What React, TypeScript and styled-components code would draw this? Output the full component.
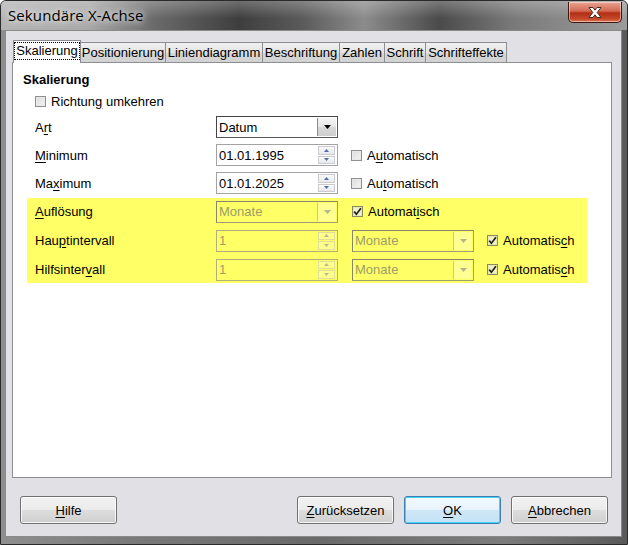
import React from "react";
import styled, { createGlobalStyle, css } from "styled-components";

const GlobalStyle = createGlobalStyle`
  html, body {
    margin: 0;
    padding: 0;
    background: #ffffff;
  }
  body {
    font-family: "Liberation Sans", Arial, sans-serif;
    font-size: 13px;
    color: #000;
  }
`;

const Window = styled.div`
  width: 628px;
  height: 545px;
  box-sizing: border-box;
  display: flex;
  flex-direction: column;
  background: linear-gradient(
      90deg,
      #8f8f8f 0%,
      #7a7a7a 20%,
      #6a6a6a 50%,
      #7c7c7c 80%,
      #5a5a5a 100%
    );
  border: 1px solid #2a2a2a;
  border-radius: 6px 6px 0 0;
  overflow: hidden;
`;

const TitleBar = styled.div`
  height: 29px;
  flex: none;
  display: flex;
  align-items: center;
  justify-content: space-between;
  padding: 0 5px 0 7px;
  background:
    linear-gradient(180deg, rgba(255, 255, 255, 0.25) 0%, rgba(255, 255, 255, 0) 60%),
    linear-gradient(
      90deg,
      #b4b4b4 0%,
      #a8a8a8 14%,
      #6c6c6c 24%,
      #3e3e3e 38%,
      #5a5a5a 48%,
      #8c8c8c 58%,
      #4a4a4a 70%,
      #7a7a7a 82%,
      #9c9c9c 100%
    );
`;

const Title = styled.span`
  font-family: "Open Sans", "Liberation Sans", sans-serif;
  font-size: 15px;
  color: #000;
  letter-spacing: 0.1px;
  text-shadow: 0 0 6px rgba(255, 255, 255, 0.95), 0 0 12px rgba(255, 255, 255, 0.8);
  margin-top: -1px;
`;

const CloseButton = styled.div`
  align-self: flex-start;
  margin-top: 1px;
  width: 52px;
  height: 20px;
  border: 1px solid #3d1810;
  border-top: none;
  border-radius: 0 0 5px 5px;
  background: linear-gradient(180deg, #e8a493 0%, #d46a52 45%, #b22f14 55%, #c64a2c 85%, #e07a55 100%);
  box-shadow: inset 0 0 0 1px rgba(255, 255, 255, 0.45);
  display: flex;
  align-items: center;
  justify-content: center;
`;

const Client = styled.div`
  flex: 1;
  margin: 0 5px 7px 4px;
  background: #e1e0e5;
  border: 1px solid #8a8a8a;
  display: flex;
  flex-direction: column;
  padding: 9px 9px 0 6px;
`;

const TabRow = styled.div`
  display: flex;
  align-items: flex-end;
  height: 22px;
  padding-left: 1px;
  position: relative;
  z-index: 1;
`;

const Tab = styled.div<{ $w: number; $active?: boolean }>`
  width: ${(p) => p.$w}px;
  box-sizing: border-box;
  height: 20px;
  border: 1px solid #8c8e94;
  border-bottom: none;
  margin-left: -1px;
  background: linear-gradient(180deg, #f1f1f1 0%, #e3e3e3 50%, #d7d7d7 51%, #d2d2d2 100%);
  display: flex;
  align-items: center;
  justify-content: center;
  font-size: 13px;
  white-space: nowrap;
  &:first-child {
    margin-left: 0;
  }
  ${(p) =>
    p.$active &&
    css`
      height: 23px;
      margin-bottom: -1px;
      background: #ffffff;
      padding-bottom: 2px;
    `}
`;

const FocusText = styled.span`
  outline: 1px dotted #000;
  outline-offset: 0;
  padding: 0 1px;
  line-height: 16px;
`;

const Panel = styled.div`
  height: 416px;
  box-sizing: border-box;
  background: #ffffff;
  border: 1px solid #8c8e94;
  padding: 8px 0 0 10px;
  display: flex;
  flex-direction: column;
`;

const SectionTitle = styled.div`
  font-weight: bold;
  font-size: 13px;
  height: 17px;
  line-height: 17px;
`;

const CheckRow = styled.label`
  display: flex;
  align-items: center;
  gap: 5px;
  height: 22px;
  padding-left: 12px;
  margin-top: 2px;
`;

const Row = styled.div<{ $first?: boolean }>`
  display: flex;
  align-items: center;
  height: 22px;
  margin-top: ${(p) => (p.$first ? 4 : 6)}px;
`;

const HighlightBlock = styled.div`
  margin: 4px 0 0 4px;
  width: 560px;
  box-sizing: border-box;
  background: #ffff66;
  padding: 2px 0;
  display: flex;
  flex-direction: column;
`;

const HRow = styled.div<{ $first?: boolean }>`
  display: flex;
  align-items: center;
  height: 23px;
  margin-top: ${(p) => (p.$first ? 0 : 6)}px;
`;

const Label = styled.span<{ $w: number; $indent: number }>`
  width: ${(p) => p.$w}px;
  padding-left: ${(p) => p.$indent}px;
  box-sizing: border-box;
  flex: none;
  white-space: nowrap;
`;

const Field = styled.div<{ $disabled?: boolean }>`
  width: 122px;
  height: 22px;
  box-sizing: border-box;
  flex: none;
  display: flex;
  align-items: stretch;
  border: 1px solid ${(p) => (p.$disabled ? "#b0b07a" : "#a3a3a3")};
  background: ${(p) => (p.$disabled ? "transparent" : "#ffffff")};
  color: ${(p) => (p.$disabled ? "#9d9d6a" : "#000")};
`;

const ComboField = styled(Field)`
  border-color: ${(p) => (p.$disabled ? "#9e9e74" : "#555")};
  border-top-color: ${(p) => (p.$disabled ? "#86866a" : "#444")};
  border-left-color: ${(p) => (p.$disabled ? "#86866a" : "#444")};
`;

const FieldText = styled.span`
  flex: 1;
  padding-left: 2px;
  display: flex;
  align-items: center;
  white-space: nowrap;
  overflow: hidden;
`;

const DropButton = styled.div<{ $disabled?: boolean }>`
  width: 18px;
  flex: none;
  margin: 1px;
  display: flex;
  align-items: center;
  justify-content: center;
  border-left: 1px solid ${(p) => (p.$disabled ? "#c8c88a" : "#8d8d8d")};
  background: ${(p) =>
    p.$disabled
      ? "rgba(255,255,230,0.35)"
      : "linear-gradient(180deg, #f4f4f4 0%, #e6e6e6 50%, #d8d8d8 51%, #cfcfcf 100%)"};
`;

const SpinButtons = styled.div`
  width: 17px;
  flex: none;
  margin: 1px 2px 1px 1px;
  display: flex;
  flex-direction: column;
  gap: 1px;
`;

const SpinHalf = styled.div<{ $disabled?: boolean }>`
  flex: 1;
  display: flex;
  align-items: center;
  justify-content: center;
  border: 1px solid ${(p) => (p.$disabled ? "#dede9a" : "#c9cbd1")};
  background: ${(p) =>
    p.$disabled ? "rgba(255,255,230,0.3)" : "linear-gradient(180deg, #fafafa 0%, #e9e9ec 100%)"};
`;

const Box = styled.span<{ $disabled?: boolean }>`
  width: 11px;
  height: 11px;
  flex: none;
  box-sizing: border-box;
  border: 1px solid ${(p) => (p.$disabled ? "#8a8a60" : "#8f8f8f")};
  background: ${(p) =>
    p.$disabled
      ? "#f0f0c8"
      : "linear-gradient(135deg, #dcdcdc 0%, #f4f4f4 100%)"};
  box-shadow: inset 0 0 0 1px ${(p) => (p.$disabled ? "#e8e8b0" : "#e9e9e9")};
  display: flex;
  align-items: center;
  justify-content: center;
`;

const AutoCheck = styled.div<{ $gap: number }>`
  display: flex;
  align-items: center;
  gap: 5px;
  margin-left: ${(p) => p.$gap}px;
  white-space: nowrap;
`;

const AutoCombo = styled.div`
  margin-left: 14px;
  display: flex;
`;

const Footer = styled.div`
  flex: 1;
  display: flex;
  align-items: center;
  padding: 6px 4px 0 8px;
`;

const Spacer = styled.div`
  flex: 1;
`;

const Button = styled.button<{ $default?: boolean }>`
  width: 97px;
  height: 28px;
  margin-left: 10px;
  font-family: "Liberation Sans", Arial, sans-serif;
  font-size: 13px;
  color: #000;
  border-radius: 3px;
  border: 1px solid ${(p) => (p.$default ? "#3c7fb1" : "#707070")};
  background: ${(p) =>
    p.$default
      ? "linear-gradient(180deg, #f2f9fd 0%, #e7f3fb 50%, #cfe8f8 51%, #c3e1f6 100%)"
      : "linear-gradient(180deg, #f2f2f2 0%, #ebebeb 50%, #dddddd 51%, #cfcfcf 100%)"};
  box-shadow: inset 0 0 0 1px ${(p) => (p.$default ? "#48d0f8" : "rgba(255,255,255,0.8)")};
  padding: 0;
  &:first-child {
    margin-left: 0;
  }
`;

const Mn = styled.u`
  text-decoration-thickness: 1px;
  text-underline-offset: 2px;
`;

const ArrowDown = ({ color = "#000" }: { color?: string }) => (
  <svg width="7" height="4" viewBox="0 0 7 4">
    <path d="M0 0H7L3.5 4Z" fill={color} />
  </svg>
);

const SpinArrow = ({ up, color }: { up?: boolean; color: string }) => (
  <svg width="5" height="3" viewBox="0 0 5 3">
    <path d={up ? "M0 3H5L2.5 0Z" : "M0 0H5L2.5 3Z"} fill={color} />
  </svg>
);

const Tick = () => (
  <svg width="9" height="9" viewBox="0 0 9 9">
    <path d="M1.2 4.6L3.4 7.2L7.9 1.2" stroke="#202020" strokeWidth="1.7" fill="none" />
  </svg>
);

const Combo = ({ text, disabled }: { text: string; disabled?: boolean }) => (
  <ComboField $disabled={disabled}>
    <FieldText>{text}</FieldText>
    <DropButton $disabled={disabled}>
      <ArrowDown color={disabled ? "#b5b58a" : "#000"} />
    </DropButton>
  </ComboField>
);

const Spin = ({ text, disabled }: { text: string; disabled?: boolean }) => (
  <Field $disabled={disabled}>
    <FieldText>{text}</FieldText>
    <SpinButtons>
      <SpinHalf $disabled={disabled}>
        <SpinArrow up color={disabled ? "#b8b88a" : "#4a6ea8"} />
      </SpinHalf>
      <SpinHalf $disabled={disabled}>
        <SpinArrow color={disabled ? "#b8b88a" : "#4a6ea8"} />
      </SpinHalf>
    </SpinButtons>
  </Field>
);

const Auto = ({
  checked,
  gap,
  children,
}: {
  checked?: boolean;
  gap: number;
  children: React.ReactNode;
}) => (
  <AutoCheck $gap={gap}>
    <Box $disabled={checked}>{checked && <Tick />}</Box>
    <span>{children}</span>
  </AutoCheck>
);

const tabs = [
  { name: "Positionierung", w: 86 },
  { name: "Liniendiagramm", w: 98 },
  { name: "Beschriftung", w: 78 },
  { name: "Zahlen", w: 46 },
  { name: "Schrift", w: 42 },
  { name: "Schrifteffekte", w: 82 },
];

export default function App() {
  return (
    <>
      <GlobalStyle />
      <Window>
        <TitleBar>
          <Title>Sekundäre X-Achse</Title>
          <CloseButton>
            <svg width="16" height="13" viewBox="0 0 16 13">
              <path
                d="M2 1.5H6L8 4.2L10 1.5H14L10.2 6.5L14 11.5H10L8 8.8L6 11.5H2L5.8 6.5Z"
                fill="#ffffff"
                stroke="#4a2a22"
                strokeWidth="1"
                strokeLinejoin="round"
              />
            </svg>
          </CloseButton>
        </TitleBar>
        <Client>
          <TabRow>
            <Tab $w={68} $active>
              <FocusText>Skalierung</FocusText>
            </Tab>
            {tabs.map((t) => (
              <Tab key={t.name} $w={t.w}>
                {t.name}
              </Tab>
            ))}
          </TabRow>
          <Panel>
            <SectionTitle>Skalierung</SectionTitle>
            <CheckRow>
              <Box />
              <span>
                Richtun<Mn>g</Mn> umkehren
              </span>
            </CheckRow>
            <Row $first>
              <Label $w={193} $indent={12}>
                A<Mn>r</Mn>t
              </Label>
              <Combo text="Datum" />
            </Row>
            <Row>
              <Label $w={193} $indent={12}>
                <Mn>M</Mn>inimum
              </Label>
              <Spin text="01.01.1995" />
              <Auto gap={13}>
                A<Mn>u</Mn>tomatisch
              </Auto>
            </Row>
            <Row>
              <Label $w={193} $indent={12}>
                Ma<Mn>x</Mn>imum
              </Label>
              <Spin text="01.01.2025" />
              <Auto gap={13}>
                Au<Mn>t</Mn>omatisch
              </Auto>
            </Row>
            <HighlightBlock>
              <HRow $first>
                <Label $w={189} $indent={8}>
                  <Mn>A</Mn>uflösung
                </Label>
                <Combo text="Monate" disabled />
                <Auto checked gap={14}>
                  Automat<Mn>i</Mn>sch
                </Auto>
              </HRow>
              <HRow>
                <Label $w={189} $indent={8}>
                  Hau<Mn>p</Mn>tintervall
                </Label>
                <Spin text="1" disabled />
                <AutoCombo>
                  <Combo text="Monate" disabled />
                </AutoCombo>
                <Auto checked gap={13}>
                  Automatis<Mn>c</Mn>h
                </Auto>
              </HRow>
              <HRow>
                <Label $w={189} $indent={8}>
                  Hilfsinter<Mn>v</Mn>all
                </Label>
                <Spin text="1" disabled />
                <AutoCombo>
                  <Combo text="Monate" disabled />
                </AutoCombo>
                <Auto checked gap={13}>
                  Automatis<Mn>c</Mn>h
                </Auto>
              </HRow>
            </HighlightBlock>
          </Panel>
          <Footer>
            <Button>
              <Mn>H</Mn>ilfe
            </Button>
            <Spacer />
            <Button>
              <Mn>Z</Mn>urücksetzen
            </Button>
            <Button $default>
              <Mn>O</Mn>K
            </Button>
            <Button>
              <Mn>A</Mn>bbrechen
            </Button>
          </Footer>
        </Client>
      </Window>
    </>
  );
}
